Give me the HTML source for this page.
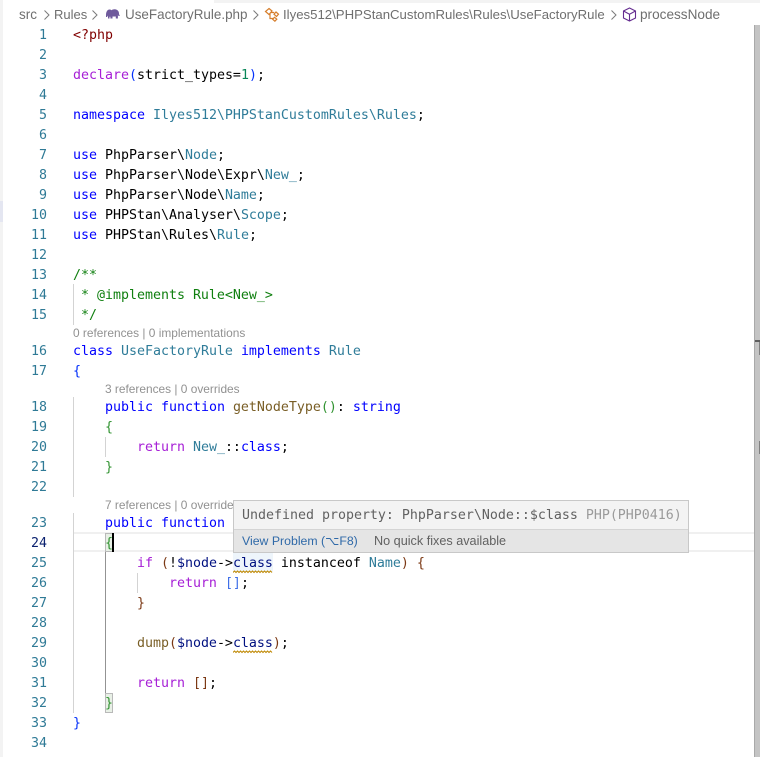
<!DOCTYPE html>
<html>
<head>
<meta charset="utf-8">
<style>
html,body{margin:0;padding:0;background:#fff;width:760px;height:757px;overflow:hidden}
#r{position:relative;width:760px;height:757px;overflow:hidden;background:#fff}
.a{position:absolute}
.n{position:absolute;left:0;width:47px;height:20px;line-height:20px;text-align:right;font:13.29px/20px "DejaVu Sans Mono",monospace;color:#2f7a96;transform:translateY(2px)}
.l{position:absolute;left:73px;height:20px;white-space:pre;font:13.29px/20px "DejaVu Sans Mono",monospace;color:#000;transform:translateY(2px)}
.cl{position:absolute;height:16px;white-space:pre;font:11.9px/16px "Liberation Sans",sans-serif;color:#919191}
.bc{position:absolute;top:6px;height:18px;white-space:pre;font:13px/18px "Liberation Sans",sans-serif;color:#6f6f6f}
.k{color:#0000ff}.t{color:#2f7c99}.p{color:#a61fd6}.c{color:#0f7f0f}.f{color:#795e26}.v{color:#001080}
.b1{color:#0431fa}.b2{color:#319331}.b3{color:#7b3814}.d{color:#098658}.m{color:#800000}
</style>
</head>
<body>
<div id="r">
<div class="a" style="left:214px;top:0;width:546px;height:3px;background:#f3f3f3"></div>
<div class="a" style="left:0;top:0;width:3px;height:757px;background:#f3f3f3"></div>
<div class="a" style="left:0;top:201px;width:3px;height:21px;background:#e4e6f1"></div>

<div class="a" style="left:73px;top:532px;width:681px;height:20px;box-sizing:border-box;border-top:2px solid #f0f0f0;border-bottom:2px solid #f0f0f0"></div>

<div class="a" style="left:73px;top:284px;width:1px;height:41px;background:#d3d3d3"></div>
<div class="a" style="left:73px;top:397px;width:1px;height:100px;background:#d3d3d3"></div>
<div class="a" style="left:73px;top:513px;width:1px;height:200px;background:#d3d3d3"></div>
<div class="a" style="left:105px;top:437px;width:1px;height:20px;background:#d3d3d3"></div>
<div class="a" style="left:105px;top:552px;width:1px;height:141px;background:#939393"></div>
<div class="a" style="left:137px;top:573px;width:1px;height:20px;background:#d3d3d3"></div>

<div class="a" style="left:105px;top:533px;width:8px;height:19px;box-sizing:border-box;background:#e8f0e6;border:1px solid #b9b9b9"></div>
<div class="a" style="left:105px;top:693px;width:8px;height:20px;box-sizing:border-box;background:#e8f0e6;border:1px solid #b9b9b9"></div>
<div class="a" style="left:233px;top:553px;width:40px;height:19px;background:#eef5fb"></div>

<div class="bc" style="left:19px;font-size:13.5px">src</div>
<svg class="a" style="left:42px;top:8px" width="10" height="14"><path d="M2.500 2.500 7 7l-4.500 4.500" fill="none" stroke="#7a7a7a"/></svg>
<div class="bc" style="left:54px">Rules</div>
<svg class="a" style="left:90px;top:8px" width="10" height="14"><path d="M2.500 2.500 7 7l-4.500 4.500" fill="none" stroke="#7a7a7a"/></svg>
<svg class="a" style="left:105px;top:7px" width="16" height="13"><path d="M1 8C1 4 3 2.500 4.500 2.500c1 0 1.500.3 2 .8C7.500 2.500 9 2 11 2.500c2 .6 3.200 2.300 3 4.500l.8 2h-1.300l-.6-1.200V11.500h-2.100V9.500H7.500v2H5.400V9.800H4.500v1.700H3V8.500L2 10H1z" fill="#6f5a9c"/></svg>
<div class="bc" style="left:125px;font-size:13.44px">UseFactoryRule.php</div>
<svg class="a" style="left:251px;top:8px" width="10" height="14"><path d="M2.500 2.500 7 7l-4.500 4.500" fill="none" stroke="#7a7a7a"/></svg>
<svg class="a" style="left:264px;top:7px" width="16" height="15" fill="none" stroke="#d67e2c" stroke-width="1.200"><path d="M5 1.500 8 4 5 7.500 1.500 4.500z"/><path d="M12 5l2.500 2.200-2 2.300L10 7.200z"/><path d="M10.500 10.300l2.300 1.900-1.900 2-2.300-2z"/><path d="M6 6.500v5H9M7 5.500h3.200"/></svg>
<div class="bc" style="left:283px;font-size:13.2px">Ilyes512\PHPStanCustomRules\Rules\UseFactoryRule</div>
<svg class="a" style="left:609px;top:8px" width="10" height="14"><path d="M2.500 2.500 7 7l-4.500 4.500" fill="none" stroke="#7a7a7a"/></svg>
<svg class="a" style="left:622px;top:7px" width="15" height="15" fill="none" stroke="#652d90" stroke-width="1.100"><path d="M7.500 1 13.500 4v7l-6 3-6-3V4z"/><path d="M1.500 4l6 3.200 6-3.200M7.500 7.200V14"/></svg>
<div class="bc" style="left:640px;font-size:13.6px">processNode</div>

<div class="n" style="top:24px">1</div><div class="l" style="top:24px"><span class="m">&lt;?php</span></div>
<div class="n" style="top:44px">2</div>
<div class="n" style="top:64px">3</div><div class="l" style="top:64px"><span class="p">declare</span><span class="b1">(</span>strict_types=<span class="d">1</span><span class="b1">)</span>;</div>
<div class="n" style="top:84px">4</div>
<div class="n" style="top:104px">5</div><div class="l" style="top:104px"><span class="k">namespace</span> <span class="t">Ilyes512\PHPStanCustomRules\Rules</span>;</div>
<div class="n" style="top:124px">6</div>
<div class="n" style="top:144px">7</div><div class="l" style="top:144px"><span class="k">use</span> PhpParser\<span class="t">Node</span>;</div>
<div class="n" style="top:164px">8</div><div class="l" style="top:164px"><span class="k">use</span> PhpParser\Node\Expr\<span class="t">New_</span>;</div>
<div class="n" style="top:184px">9</div><div class="l" style="top:184px"><span class="k">use</span> PhpParser\Node\<span class="t">Name</span>;</div>
<div class="n" style="top:204px">10</div><div class="l" style="top:204px"><span class="k">use</span> PHPStan\Analyser\<span class="t">Scope</span>;</div>
<div class="n" style="top:224px">11</div><div class="l" style="top:224px"><span class="k">use</span> PHPStan\Rules\<span class="t">Rule</span>;</div>
<div class="n" style="top:244px">12</div>
<div class="n" style="top:264px">13</div><div class="l c" style="top:264px">/**</div>
<div class="n" style="top:284px">14</div><div class="l c" style="top:284px"> * @implements Rule&lt;New_&gt;</div>
<div class="n" style="top:304px">15</div><div class="l c" style="top:304px"> */</div>
<div class="cl" style="left:73px;top:325px">0 references | 0 implementations</div>
<div class="n" style="top:340px">16</div><div class="l" style="top:340px"><span class="k">class</span> <span class="t">UseFactoryRule</span> <span class="k">implements</span> <span class="t">Rule</span></div>
<div class="n" style="top:360px">17</div><div class="l" style="top:360px"><span class="b1">{</span></div>
<div class="cl" style="left:105px;top:381px">3 references | 0 overrides</div>
<div class="n" style="top:396px">18</div><div class="l" style="top:396px">    <span class="k">public</span> <span class="k">function</span> <span class="f">getNodeType</span><span class="b2">()</span>: <span class="k">string</span></div>
<div class="n" style="top:416px">19</div><div class="l" style="top:416px">    <span class="b2">{</span></div>
<div class="n" style="top:436px">20</div><div class="l" style="top:436px">        <span class="p">return</span> <span class="t">New_</span>::<span class="k">class</span>;</div>
<div class="n" style="top:456px">21</div><div class="l" style="top:456px">    <span class="b2">}</span></div>
<div class="n" style="top:476px">22</div>
<div class="cl" style="left:105px;top:497px">7 references | 0 overrides</div>
<div class="n" style="top:512px">23</div><div class="l" style="top:512px">    <span class="k">public</span> <span class="k">function</span> <span class="f">processNode</span></div>
<div class="n" style="top:532px;color:#0b216f">24</div><div class="l" style="top:532px">    <span class="b2">{</span></div>
<div class="a" style="left:112px;top:533px;width:2px;height:19px;background:#000"></div>
<div class="n" style="top:552px">25</div><div class="l" style="top:552px">        <span class="p">if</span> <span class="b3">(</span>!<span class="v">$node</span>-&gt;<span class="v">class</span> instanceof <span class="t">Name</span><span class="b3">)</span> <span class="b3">{</span></div>
<div class="n" style="top:572px">26</div><div class="l" style="top:572px">            <span class="p">return</span> <span style="color:#3f6fe8">[]</span>;</div>
<div class="n" style="top:592px">27</div><div class="l" style="top:592px">        <span class="b3">}</span></div>
<div class="n" style="top:612px">28</div>
<div class="n" style="top:632px">29</div><div class="l" style="top:632px">        <span class="f">dump</span><span class="b3">(</span><span class="v">$node</span>-&gt;<span class="v">class</span><span class="b3">)</span>;</div>
<div class="n" style="top:652px">30</div>
<div class="n" style="top:672px">31</div><div class="l" style="top:672px">        <span class="p">return</span> <span class="b3">[]</span>;</div>
<div class="n" style="top:692px">32</div><div class="l" style="top:692px">    <span class="b2">}</span></div>
<div class="n" style="top:712px">33</div><div class="l" style="top:712px"><span class="b1">}</span></div>
<div class="n" style="top:732px">34</div>

<svg class="a" style="left:233px;top:570px" width="40" height="4"><path d="M0 2.500l1.500-1.500 1.500 1.500 1.500-1.500 1.500 1.500 1.500-1.500 1.500 1.500 1.500-1.500 1.500 1.500 1.500-1.500 1.500 1.500 1.500-1.500 1.500 1.500 1.500-1.500 1.500 1.500 1.500-1.500 1.500 1.500 1.500-1.500 1.500 1.500 1.500-1.500 1.500 1.500 1.500-1.500 1.500 1.500 1.500-1.500 1.500 1.500 1.500-1.500 1.500 1.500" fill="none" stroke="#bf8803"/></svg>
<svg class="a" style="left:233px;top:650px" width="40" height="4"><path d="M0 2.500l1.500-1.500 1.500 1.500 1.500-1.500 1.500 1.500 1.500-1.500 1.500 1.500 1.500-1.500 1.500 1.500 1.500-1.500 1.500 1.500 1.500-1.500 1.500 1.500 1.500-1.500 1.500 1.500 1.500-1.500 1.500 1.500 1.500-1.500 1.500 1.500 1.500-1.500 1.500 1.500 1.500-1.500 1.500 1.500 1.500-1.500 1.500 1.500 1.500-1.500 1.500 1.500" fill="none" stroke="#bf8803"/></svg>

<div class="a" style="left:233px;top:500px;width:456px;height:53px;box-sizing:border-box;background:#f3f3f3;border:1px solid #c8c8c8">
  <div class="a" style="left:0;top:28px;width:454px;height:23px;background:#e5e5e5;border-top:1px solid #d4d4d4;box-sizing:border-box"></div>
  <div class="a" style="left:8px;top:5px;height:20px;white-space:pre;font:13.29px/20px 'DejaVu Sans Mono',monospace;color:#616161">Undefined property: PhpParser\Node::$class <span style="color:#9a9a9a">PHP(PHP0416)</span></div>
  <div class="a" style="left:8px;top:31px;height:18px;white-space:pre;font:12.3px/18px 'Liberation Sans','DejaVu Sans',sans-serif;color:#2f69a8">View Problem (⌥F8)</div>
  <div class="a" style="left:140px;top:31px;height:18px;white-space:pre;font:12.65px/18px 'Liberation Sans',sans-serif;color:#616161">No quick fixes available</div>
</div>

<div class="a" style="left:754px;top:25px;width:6px;height:732px;background:#c4c4c4"></div>
<div class="a" style="left:754px;top:25px;width:1px;height:732px;background:#a9a9a9"></div>
<div class="a" style="left:755px;top:340px;width:5px;height:2px;background:#5e5e5e"></div>
<div class="a" style="left:759px;top:342px;width:1px;height:13px;background:#808080"></div>
<div class="a" style="left:759px;top:441px;width:1px;height:13px;background:#808080"></div>
</div>
</body>
</html>
